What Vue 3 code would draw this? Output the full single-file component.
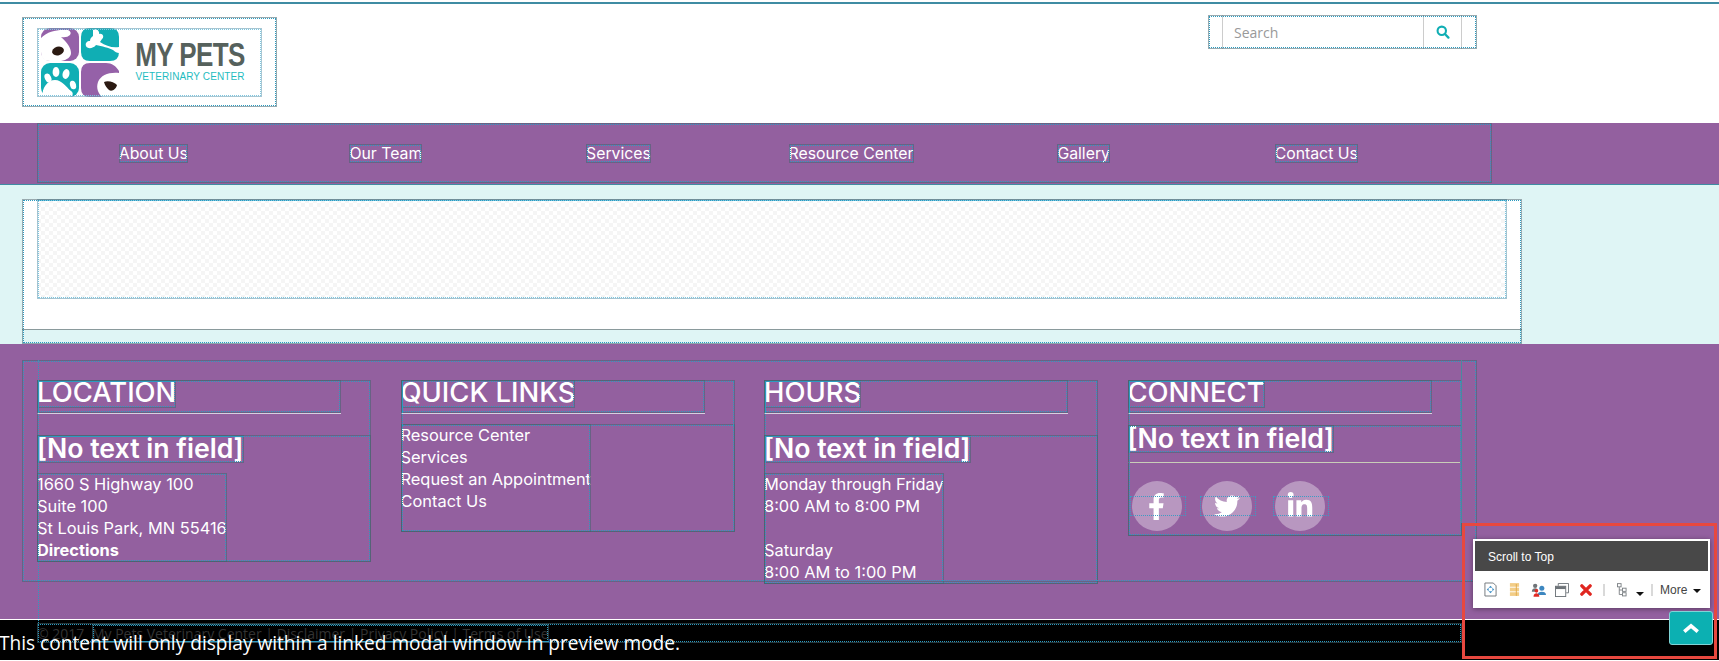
<template>
  <div class="page">
    <header class="header">
      <div class="logo-box ol">
        <div class="logo ol ol-light">
          <svg class="logo-mark" viewBox="0 0 78 69" width="78" height="69">
            <!-- top left: dog face -->
            <rect x="0" y="0" width="38" height="33" rx="9" fill="#9561a8" />
            <path d="M0 10 C6 4 14 2 22 2 L27 2 Q31 4 29 7 Q26 10 20 9 C26 14 30 20 30 25 C30 29 26 32 20 33 L9 33 Q0 33 0 24Z" fill="#fff" />
            <ellipse cx="17" cy="23" rx="6" ry="4.300" fill="#2b1a12" transform="rotate(-15 17 23)" />
            <!-- top right: bone -->
            <path d="M40 9 Q40 0 49 0 L69 0 Q78 0 78 9 L78 24 Q78 33 69 33 L49 33 Q40 33 40 24Z" fill="#10aeb4" />
            <path d="M52 2 C55 0 59 3 58 6 C63 5 63 10 61 11 L59 14 C65 18 71 20 78 19 L78 25 C76 25 74 24 72 22 C68 20 61 18 55 17 C52 21 46 21 45 18 C44 15 46 13 49 13 C49 10 51 9 52 8Z" fill="#fff" />
            <!-- bottom left: paw -->
            <rect x="0" y="35" width="38" height="34" rx="9" fill="#10aeb4" />
            <path d="M2 69 C0 60 7 52 14 52 C21 52 25 59 30 63 C33 65 32 69 28 69Z" fill="#fff" />
            <ellipse cx="7" cy="50" rx="3.200" ry="4.600" fill="#fff" transform="rotate(-25 7 50)" />
            <ellipse cx="15" cy="44" rx="3.400" ry="5" fill="#fff" />
            <ellipse cx="25" cy="46" rx="3.400" ry="5" fill="#fff" transform="rotate(15 25 46)" />
            <ellipse cx="32" cy="57" rx="3" ry="4.400" fill="#fff" transform="rotate(-15 32 57)" />
            <!-- bottom right: dog nose -->
            <path d="M40 44 Q40 35 49 35 L65 35 C71 35 75 38 78 43 L78 45 C68 44 60 47 57 54 C55 60 57 65 61 69 L49 69 Q40 69 40 60Z" fill="#9561a8" />
            <path d="M63 54 C67 52 73 54 76 57 C75 61 71 64 68 62 C66 60 64 58 63 54Z" fill="#2b1a12" />
          </svg>
          <div class="logo-text">
            <span class="logo-title">MY PETS</span>
            <span class="logo-sub">VETERINARY CENTER</span>
          </div>
        </div>
      </div>
      <div class="search ol">
        <input class="search-input" type="text" placeholder="Search" />
        <button class="search-btn">
          <svg viewBox="0 0 16 16" width="14" height="14">
            <circle cx="6.600" cy="6.600" r="4.800" fill="none" stroke="#10aeb4" stroke-width="2.400" />
            <path d="M10.200 10.200 14.200 14.400" stroke="#10aeb4" stroke-width="2.600" stroke-linecap="round" />
          </svg>
        </button>
      </div>
    </header>

    <nav class="nav">
      <div class="nav-inner ol">
        <div v-for="item in navItems" :key="item" class="nav-cell">
          <a class="nav-link ol">{{ item }}</a>
        </div>
      </div>
    </nav>

    <section class="hero">
      <div class="hero-frame ol">
        <div class="hero-white">
          <div class="hero-inner ol ol-light"></div>
        </div>
      </div>
    </section>

    <footer class="footer">
      <div class="footer-box ol">
        <div class="col ol">
          <div class="col-head ol"><h3 class="ol">LOCATION</h3></div>
          <div class="col-body gap-lg ol">
            <div class="no-text ol">[No text in field]</div>
            <div class="lines ol">
              <div>1660 S Highway 100</div>
              <div>Suite 100</div>
              <div>St Louis Park, MN 55416</div>
              <div class="bold">Directions</div>
            </div>
          </div>
        </div>
        <div class="col ol">
          <div class="col-head ol"><h3 class="ol">QUICK LINKS</h3></div>
          <div class="col-body gap-sm ol">
            <div class="lines links ol">
              <div>Resource Center</div>
              <div>Services</div>
              <div>Request an Appointment</div>
              <div>Contact Us</div>
            </div>
          </div>
        </div>
        <div class="col ol">
          <div class="col-head ol"><h3 class="ol">HOURS</h3></div>
          <div class="col-body gap-lg ol">
            <div class="no-text ol">[No text in field]</div>
            <div class="lines ol">
              <div>Monday through Friday</div>
              <div>8:00 AM to 8:00 PM</div>
              <div class="blank"></div>
              <div>Saturday</div>
              <div>8:00 AM to 1:00 PM</div>
            </div>
          </div>
        </div>
        <div class="col ol">
          <div class="col-head ol"><h3 class="ol">CONNECT</h3></div>
          <div class="col-body gap-sm ol">
            <div class="no-text ol">[No text in field]</div>
            <div class="rule"></div>
            <div class="social">
              <a class="social-item">
                <svg viewBox="0 0 320 512" width="17" height="27"><path fill="#fff" d="M279.14 288l14.22-92.66h-88.91v-60.13c0-25.35 12.42-50.06 52.24-50.06h40.42V6.26S260.43 0 225.36 0c-73.22 0-121.08 44.38-121.08 124.72v70.62H22.89V288h81.39v224h100.17V288z" /></svg>
              </a>
              <a class="social-item">
                <svg viewBox="0 0 512 512" width="26" height="26"><path fill="#fff" d="M459.37 151.716c.325 4.548.325 9.097.325 13.645 0 138.72-105.583 298.558-298.558 298.558-59.452 0-114.68-17.219-161.137-47.106 8.447.974 16.568 1.299 25.34 1.299 49.055 0 94.213-16.568 130.274-44.832-46.132-.975-84.792-31.188-98.112-72.772 6.498.974 12.995 1.624 19.818 1.624 9.421 0 18.843-1.3 27.614-3.573-48.081-9.747-84.143-51.98-84.143-102.985v-1.299c13.969 7.797 30.214 12.67 47.431 13.319-28.264-18.843-46.781-51.005-46.781-87.391 0-19.492 5.197-37.36 14.294-52.954 51.655 63.675 129.3 105.258 216.365 109.807-1.624-7.797-2.599-15.918-2.599-24.04 0-57.828 46.782-104.934 104.934-104.934 30.213 0 57.502 12.67 76.67 33.137 23.715-4.548 46.456-13.32 66.599-25.34-7.798 24.366-24.366 44.833-46.132 57.827 21.117-2.273 41.584-8.122 60.426-16.243-14.292 20.791-32.161 39.308-52.628 54.253z" /></svg>
              </a>
              <a class="social-item">
                <svg viewBox="0 0 448 512" width="26" height="28"><path fill="#fff" d="M100.28 448H7.4V148.9h92.88zM53.79 108.1C24.09 108.1 0 83.5 0 53.8a53.79 53.79 0 0 1 107.58 0c0 29.7-24.1 54.3-53.79 54.3zM447.9 448h-92.68V302.4c0-34.7-.7-79.2-48.29-79.2-48.29 0-55.69 37.7-55.69 76.7V448h-92.78V148.9h89.08v40.8h1.3c12.4-23.5 42.69-48.3 87.88-48.3 94 0 111.28 61.9 111.28 142.3V448z" /></svg>
              </a>
            </div>
          </div>
        </div>
      </div>
    </footer>

    <div class="bottom">
      <div class="copy-frame ol">
        <span class="copy">© 2017 <span class="copy-links ol">My Pets Veterinary Center | Disclaimer | Privacy Policy | Terms of Use</span></span>
      </div>
    </div>

    <!-- overlays -->
    <div class="guide guide-left"></div>
    <div class="guide guide-inner"></div>
    <div class="modal-note">This content will only display within a linked modal window in preview mode.</div>

    <div class="scroll-frame"></div>
    <div class="tooltip">
      <div class="tooltip-title">Scroll to Top</div>
      <div class="tooltip-tools">
        <svg class="tool" viewBox="0 0 14 16" width="13" height="15">
          <path d="M1 1H10L13 4V15H1Z" fill="#fff" stroke="#6d7378" />
          <path d="M7 4 9 6H5ZM7 12 5 10H9ZM3 8 5 6V10ZM11 8 9 10V6Z" fill="#3d8fc6" />
        </svg>
        <svg class="tool t2" viewBox="0 0 12 16" width="11" height="15">
          <rect x="1" y="1" width="10" height="4" fill="#f2cd87" />
          <rect x="1" y="6" width="10" height="4" fill="#f2cd87" />
          <rect x="1" y="11" width="10" height="4" fill="#f2cd87" />
          <path d="M8 2V15" stroke="#e0a94a" />
        </svg>
        <svg class="tool t3" viewBox="0 0 18 16" width="15" height="14">
          <circle cx="5" cy="3" r="2.600" fill="#6f7478" />
          <path d="M1 10C1 7 3 6 5 6S8 7 8 8L5 10Z" fill="#6f7478" />
          <circle cx="13" cy="6" r="3" fill="#3d87c0" />
          <path d="M8 14C8 11 10 10 13 10S18 11 18 14Z" fill="#3d87c0" />
          <circle cx="6.500" cy="9" r="2.200" fill="#e02a24" />
          <path d="M3 16C3 13 5 12 6.500 12S10 13 10 16Z" fill="#e02a24" />
        </svg>
        <svg class="tool t4" viewBox="0 0 15 15" width="14" height="14">
          <path d="M3.500 3V.5H14.500V10.500H12" fill="none" stroke="#6d7378" />
          <rect x=".5" y="3.500" width="11" height="11" fill="#fff" stroke="#6d7378" />
          <rect x=".5" y="3.500" width="11" height="3" fill="#6d7378" />
        </svg>
        <svg class="tool t5" viewBox="0 0 13 13" width="12" height="12">
          <path d="M2 2 11 11M11 2 2 11" stroke="#e0261f" stroke-width="3.600" stroke-linecap="round" />
        </svg>
        <span class="tool-sep sep1"></span>
        <svg class="tool t6" viewBox="0 0 11 15" width="10" height="14">
          <path d="M2.500 4V12.500H6M2.500 7.500H6" fill="none" stroke="#7a7f83" />
          <rect x=".5" y=".5" width="4" height="3.500" fill="#fff" stroke="#7a7f83" />
          <rect x="6" y="5.500" width="4" height="3.500" fill="#fff" stroke="#7a7f83" />
          <rect x="6" y="10.500" width="4" height="3.500" fill="#fff" stroke="#7a7f83" />
        </svg>
        <span class="caret c1"></span>
        <span class="tool-sep sep2"></span>
        <span class="more">More</span>
        <span class="caret c2"></span>
      </div>
    </div>
    <button class="to-top">
      <svg viewBox="0 0 20 12" width="18" height="11">
        <path d="M2.500 9.500 10 3 17.500 9.500" fill="none" stroke="#fff" stroke-width="4" />
      </svg>
    </button>
  </div>
</template>

<script setup>
const navItems = ['About Us', 'Our Team', 'Services', 'Resource Center', 'Gallery', 'Contact Us'];
</script>

<style>
html, body {
  margin: 0;
  background: #fff;
}
</style>

<style scoped>
.page {
  position: relative;
  width: 1719px;
  height: 661px;
  overflow: hidden;
  font-family: Inter, "Open Sans", sans-serif;
  color: #fff;
  background: #fff;
}

/* design-mode dotted frames, drawn over the element */
.ol {
  position: relative;
}
.ol::after {
  content: '';
  position: absolute;
  inset: 1px;
  border: 1px dotted #2b9bc0;
  outline: 1px solid rgba(70, 100, 110, 0.55);
  pointer-events: none;
}
.ol-light::after {
  border-color: #7cc6e0;
  outline-color: rgba(110, 160, 180, 0.6);
}

.header {
  display: flex;
  justify-content: space-between;
  align-items: flex-start;
  height: 119px;
  margin-top: 2px;
  border-top: 2px solid #3f8ca3;
}
.logo-box {
  margin: 13px 0 0 22px;
  padding: 11px 15px 10px 15px;
  width: 225px;
  height: 69px;
}
.logo {
  display: flex;
  align-items: center;
  height: 69px;
}
.logo-mark {
  margin-left: 4px;
  flex: none;
}
.logo-text {
  display: flex;
  flex-direction: column;
  align-items: center;
  margin-left: 16px;
  width: 110px;
}
.logo-title {
  font-family: "Liberation Sans", sans-serif;
  font-weight: 700;
  font-size: 26px;
  line-height: 24px;
  color: #56615c;
  letter-spacing: -0.6px;
  white-space: nowrap;
  transform: scaleY(1.25);
}
.logo-sub {
  margin-top: 5px;
  font-family: "Liberation Sans", sans-serif;
  font-size: 10px;
  line-height: 10px;
  color: #1ebcc0;
  letter-spacing: 0.1px;
  white-space: nowrap;
}
.search {
  display: flex;
  margin: 11px 242px 0 0;
  padding-left: 14px;
  width: 255px;
  height: 34px;
}
.search-input {
  box-sizing: border-box;
  width: 202px;
  height: 34px;
  padding: 0 11px;
  border: none;
  border-left: 1px solid #ccc;
  border-right: 1px solid #ccc;
  outline: none;
  font-family: "Open Sans", sans-serif;
  font-size: 14px;
  color: #999;
}
.search-input::placeholder {
  color: #999;
}
.search-btn {
  width: 38px;
  height: 34px;
  padding: 0;
  border: none;
  border-right: 1px solid #ccc;
  background: #fff;
  display: flex;
  align-items: center;
  justify-content: center;
}

.nav {
  height: 61px;
  background: #93609f;
}
.nav-inner {
  display: flex;
  margin-left: 37px;
  width: 1455px;
  height: 60px;
}
.nav-cell {
  flex: none;
  width: 232.6px;
  display: flex;
  align-items: center;
  justify-content: center;
}
.nav-link {
  font-size: 15.8px;
  line-height: 19px;
  white-space: nowrap;
}

.hero {
  height: 145px;
  padding: 15px 0 0 22px;
  background: #dff5f5;
  box-shadow: inset 0 1px 0 #3f8ca3;
}
.hero-frame {
  width: 1500px;
  height: 145px;
}
.hero-white {
  height: 131px;
  background: #fff;
  border-bottom: 1px solid #8a9a9c;
  box-sizing: border-box;
}
.hero-inner {
  margin-left: 15px;
  width: 1470px;
  height: 100px;
  background: repeating-conic-gradient(#f5f5f5 0 25%, #fff 0 50%) 0 0 / 8px 8px;
}

.footer {
  height: 276px;
  box-sizing: border-box;
  padding: 16px 0 0 22px;
  background: #93609f;
  border-bottom: 1px solid #fff;
}
.footer-box {
  display: grid;
  grid-template-columns: repeat(4, 334px);
  column-gap: 29.5px;
  align-items: start;
  width: 1440px;
  height: 202px;
  padding: 20px 0 0 15px;
}
.col-head {
  width: 304px;
  height: 33px;
  border-bottom: 1px solid #d9cfe0;
}
.col-head h3 {
  display: inline-block;
  height: 28px;
  margin: 0;
  font-size: 27.4px;
  font-weight: 500;
  line-height: 25px;
  vertical-align: top;
}
.col-body.gap-lg {
  margin-top: 21px;
}
.col-body.gap-sm {
  margin-top: 11px;
}
.no-text {
  display: inline-block;
  height: 28px;
  font-size: 26.7px;
  font-weight: 600;
  line-height: 27px;
  white-space: nowrap;
  vertical-align: top;
}
.lines {
  width: fit-content;
  margin-top: 10px;
  padding-bottom: 1px;
  font-size: 16.4px;
  line-height: 22px;
  white-space: nowrap;
}
.lines .bold {
  font-weight: 700;
}
.blank {
  height: 22px;
}
.links {
  margin-top: 0;
  height: 107px;
}
.links div:first-child {
  margin-top: -1px;
}
.rule {
  margin-top: 9px;
  height: 1px;
  background: #c9cdb8;
}
.social {
  display: flex;
  gap: 20px;
  padding: 18px 0 5px 4px;
}
.social-item {
  position: relative;
  flex: none;
  width: 50px;
  height: 50px;
  border-radius: 50%;
  background: rgba(255, 255, 255, 0.35);
  display: flex;
  align-items: center;
  justify-content: center;
}
.social-item:last-child {
  margin-left: 3px;
}
.social-item::before {
  content: '';
  position: absolute;
  left: -2px;
  right: -4px;
  top: 15px;
  height: 18px;
  border: 1px dotted #3c9cc4;
  pointer-events: none;
}

.bottom {
  height: 40px;
  background: #000;
  padding: 3px 0 0 37px;
  box-sizing: border-box;
}
.copy-frame {
  width: 1425px;
  height: 20px;
}
.copy {
  font-family: "Open Sans", sans-serif;
  font-size: 14px;
  line-height: 20px;
  color: #333;
  white-space: nowrap;
}
.copy-links {
  margin-left: 4px;
}

/* overlays */
.guide {
  position: absolute;
  width: 0;
  border-left: 1px dotted #2b9bc0;
}
.guide-left {
  left: 38px;
  top: 360px;
  height: 265px;
}
.guide-inner {
  left: 1461px;
  top: 360px;
  height: 163px;
  border-left: 1px solid #4a8a9e;
}
.modal-note {
  position: absolute;
  left: -1px;
  top: 630px;
  font-family: "Open Sans", sans-serif;
  font-size: 19.1px;
  line-height: 26px;
  color: #fff;
  white-space: nowrap;
}
.scroll-frame {
  position: absolute;
  left: 1462px;
  top: 523px;
  width: 249px;
  height: 130px;
  border: 3px solid #e8483f;
}
.tooltip {
  position: absolute;
  left: 1473px;
  top: 539px;
  width: 237px;
  height: 69px;
  box-sizing: border-box;
  border: 2px solid #fff;
  background: #fff;
  box-shadow: 0 1px 5px rgba(0, 0, 0, 0.4);
}
.tooltip-title {
  height: 30px;
  padding-left: 13px;
  background: #484848;
  font-family: "Liberation Sans", sans-serif;
  font-size: 12px;
  line-height: 33px;
  color: #fff;
}
.tooltip-tools {
  display: flex;
  align-items: center;
  height: 37px;
  padding-left: 9px;
}
.tool {
  flex: none;
}
.t2 { margin-left: 12px; }
.t3 { margin-left: 11px; }
.t4 { margin-left: 9px; }
.t5 { margin-left: 11px; }
.tool-sep {
  flex: none;
  width: 2px;
  height: 12px;
  background: #d9d9d9;
}
.sep1 { margin-left: 11px; }
.t6 { margin-left: 12px; }
.caret {
  flex: none;
  width: 0;
  height: 0;
  border-left: 4px solid transparent;
  border-right: 4px solid transparent;
  border-top: 4px solid #111;
}
.c1 { margin: 8px 0 0 9px; }
.sep2 { margin-left: 7px; }
.more {
  margin-left: 7px;
  font-family: "Liberation Sans", sans-serif;
  font-size: 12px;
  color: #444;
}
.c2 { margin: 2px 0 0 6px; }
.to-top {
  position: absolute;
  left: 1669px;
  top: 611px;
  width: 44px;
  height: 34px;
  padding: 0;
  border: 1px solid #7fd4d6;
  border-radius: 3px;
  background: #0cb0b2;
  display: flex;
  align-items: center;
  justify-content: center;
}
</style>
